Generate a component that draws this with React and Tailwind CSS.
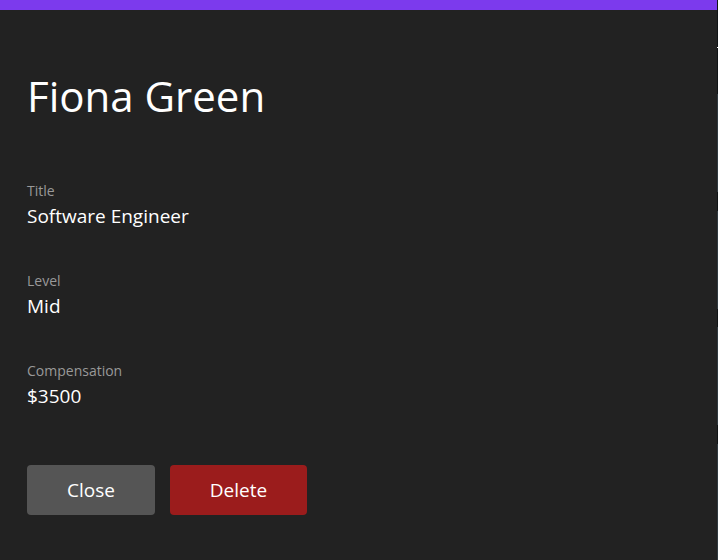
import React from "react";

const fields = [
  { label: "Title", value: "Software Engineer" },
  { label: "Level", value: "Mid" },
  { label: "Compensation", value: "$3500" },
];

export default function App() {
  return (
    <div
      className="flex h-[560px] w-[718px] bg-[#222222] text-white"
      style={{ fontFamily: '"Open Sans", "Noto Sans", sans-serif' }}
    >
      <div className="flex w-[717px] flex-col">
        <div className="h-[10px] bg-[#7c3aed]" />

        <div className="flex flex-col px-[27px]">
          <h1 className="mt-[62px] text-[42px] font-normal leading-[48px]">Fiona Green</h1>

          <div className="mt-[62px] flex flex-col gap-[42px]">
            {fields.map((f) => (
              <div key={f.label} className="flex flex-col">
                <span className="text-[14px] leading-[18px] text-[#999999]">{f.label}</span>
                <span className="mt-[2px] text-[19px] leading-[28px] text-white">{f.value}</span>
              </div>
            ))}
          </div>

          <div className="mt-[55px] flex gap-[15px]">
            <button className="h-[50px] w-[128px] rounded bg-[#555555] text-[19px] text-white">
              Close
            </button>
            <button className="h-[50px] w-[137px] rounded bg-[#9b1c1c] text-[19px] text-white">
              Delete
            </button>
          </div>
        </div>
      </div>

      {/* sliver of the page behind the dialog */}
      <div className="flex w-px flex-col">
        <div className="h-[47px] bg-[#101416]" />
        <div className="h-px bg-white" />
        <div className="h-[46px] bg-[#101416]" />
        <div className="h-[98px] bg-[#303a40]" />
        <div className="h-[19px] bg-[#101416]" />
        <div className="h-[98px] bg-[#303a40]" />
        <div className="h-[18px] bg-[#101416]" />
        <div className="h-[98px] bg-[#303a40]" />
        <div className="h-[19px] bg-[#101416]" />
        <div className="flex-1 bg-[#303a40]" />
      </div>
    </div>
  );
}
